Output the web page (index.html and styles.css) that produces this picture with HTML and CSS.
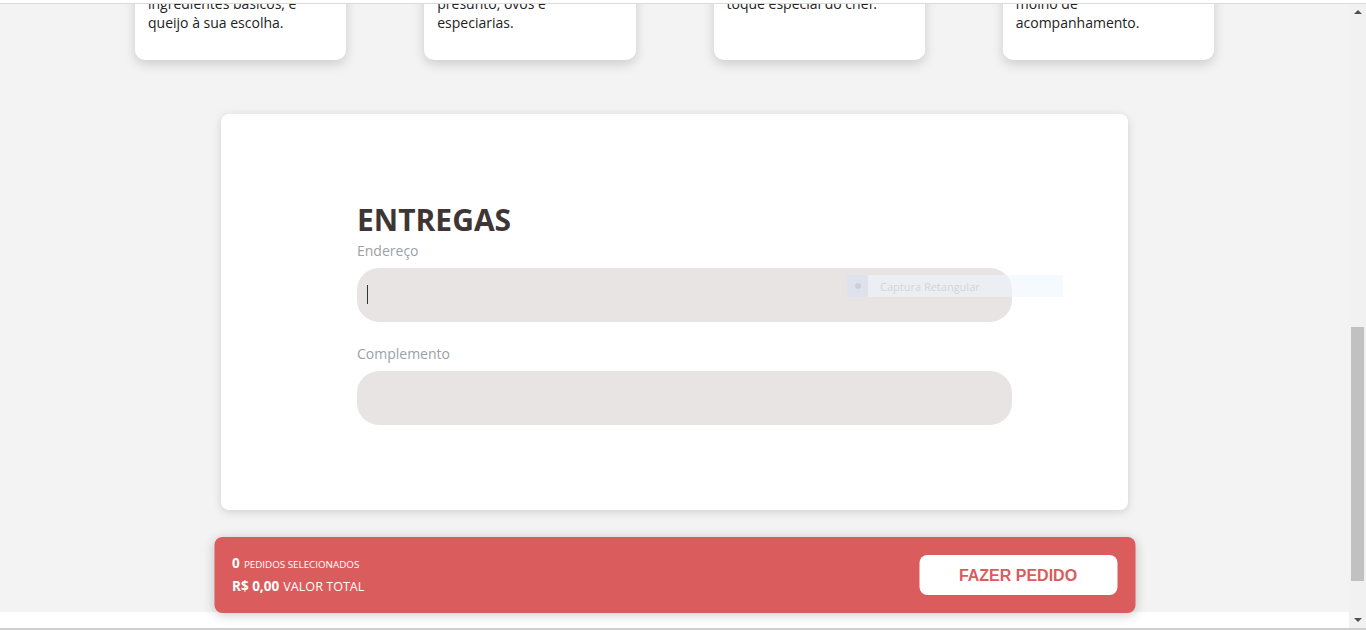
FILE: index.html
```html
<!DOCTYPE html>
<html lang="pt-BR">
<head>
<meta charset="utf-8">
<title>Pedidos</title>
<link rel="stylesheet" href="styles.css">
</head>
<body>
<div class="topbar"></div>
<div class="viewport">
  <div class="page">
    <div class="content">
      <section class="menu">
        <article class="card">
          <div class="card-img"></div>
          <h3 class="card-title">Pizza Mussarela</h3>
          <p class="card-text">Massa fina com molho,<br>ingredientes básicos, e<br>queijo à sua escolha.</p>
        </article>
        <article class="card">
          <div class="card-img"></div>
          <h3 class="card-title">Pizza Portuguesa</h3>
          <p class="card-text">Mussarela, cebola,<br>presunto, ovos e<br>especiarias.</p>
        </article>
        <article class="card">
          <div class="card-img"></div>
          <h3 class="card-title">Pizza da Casa</h3>
          <p class="card-text">Receita da casa com um<br>toque especial do chef.</p>
        </article>
        <article class="card">
          <div class="card-img"></div>
          <h3 class="card-title">Pizza de Frango</h3>
          <p class="card-text">Frango desfiado com<br>molho de<br>acompanhamento.</p>
        </article>
      </section>

      <section class="delivery">
        <div class="delivery-inner">
          <h2 class="delivery-title">ENTREGAS</h2>
          <label class="field-label" for="endereco">Endereço</label>
          <div class="field">
            <input class="field-input" id="endereco" type="text">
            <span class="caret"></span>
          </div>
          <label class="field-label second" for="complemento">Complemento</label>
          <div class="field">
            <input class="field-input" id="complemento" type="text">
          </div>
        </div>
      </section>

      <footer class="footer"></footer>
    </div>

    <div class="capture">
      <span class="capture-icon"><span class="capture-dot"></span></span>
      <span class="capture-text">Captura Retangular</span>
    </div>

    <div class="orderbar">
      <div class="order-info">
        <div class="order-line"><strong class="big">0</strong> <span class="small">PEDIDOS SELECIONADOS</span></div>
        <div class="order-line"><strong class="big">R$ 0,00</strong> <span class="mid">VALOR TOTAL</span></div>
      </div>
      <button class="order-btn" type="button">FAZER PEDIDO</button>
    </div>
  </div>
  <div class="scrollbar">
    <span class="arrow up"></span>
    <div class="track"><div class="thumb"></div></div>
    <span class="arrow down"></span>
  </div>
</div>
<div class="bottombar"></div>
</body>
</html>
```

FILE: styles.css
```css
* { box-sizing: border-box; }

html, body {
  margin: 0;
  padding: 0;
  height: 630px;
  overflow: hidden;
  background: #ffffff;
  font-family: "Open Sans", "Noto Sans", sans-serif;
}

.topbar {
  height: 4px;
  border-bottom: 1px solid #dadada;
  background: #ffffff;
}

.viewport {
  display: flex;
  height: 624px;
}

.page {
  flex: 1;
  position: relative;
  overflow: hidden;
  background: #f3f3f3;
}

.content {
  display: flex;
  flex-direction: column;
  align-items: center;
  margin-top: -182px;
}

.menu {
  display: grid;
  grid-template-columns: repeat(4, 1fr);
  gap: 78px;
  width: 1079px;
}

.card {
  background: #ffffff;
  border-radius: 10px;
  padding: 13px 13px 28px;
  box-shadow: 0 4px 12px rgba(0, 0, 0, 0.16);
}

.card-img {
  height: 100px;
  margin-bottom: 10px;
  border-radius: 6px;
  background: #eeeeee;
}

.card-title {
  margin: 0 0 6px;
  height: 24px;
  line-height: 24px;
  font-size: 16px;
  color: #333333;
}

.card-text {
  margin: 0;
  font-size: 14px;
  line-height: 19px;
  color: #222222;
}

.delivery {
  margin-top: 54px;
  width: 907px;
  height: 396px;
  background: #ffffff;
  border-radius: 8px;
  box-shadow: 0 2px 10px rgba(0, 0, 0, 0.14);
  padding: 88px 0 0 136px;
}

.delivery-inner {
  width: 655px;
  display: flex;
  flex-direction: column;
}

.delivery-title {
  margin: 0 0 4px;
  font-size: 30px;
  line-height: 35px;
  font-weight: 700;
  color: #3e3535;
}

.field-label {
  font-size: 14px;
  line-height: 20px;
  color: #9aa1a7;
  margin-bottom: 7px;
}

.field-label.second {
  margin-top: 22px;
}

.field {
  position: relative;
}

.field-input {
  display: block;
  width: 100%;
  height: 54px;
  border: none;
  outline: none;
  border-radius: 22px;
  background: #e8e4e3;
  padding: 0 10px;
  font-family: inherit;
  font-size: 15px;
}

.caret {
  position: absolute;
  left: 10px;
  top: 17px;
  width: 1px;
  height: 19px;
  background: #333333;
}

.footer {
  margin-top: 102px;
  align-self: stretch;
  height: 40px;
  background: #ffffff;
}

.capture {
  position: absolute;
  left: 847px;
  top: 271px;
  width: 216px;
  height: 22px;
  display: flex;
  align-items: center;
  background: rgba(236, 246, 255, 0.55);
}

.capture-icon {
  width: 21px;
  height: 22px;
  display: flex;
  align-items: center;
  justify-content: center;
  background: rgba(200, 208, 228, 0.4);
}

.capture-dot {
  width: 6px;
  height: 6px;
  border-radius: 50%;
  background: rgba(190, 195, 205, 0.6);
}

.capture-text {
  margin-left: 12px;
  font-size: 11px;
  color: rgba(185, 185, 195, 0.5);
}

.orderbar {
  position: absolute;
  left: 50%;
  bottom: 15px;
  transform: translateX(-50%);
  width: 921px;
  height: 76px;
  background: #db5c5c;
  border-radius: 8px;
  box-shadow: 0 2px 12px rgba(0, 0, 0, 0.2);
  display: flex;
  align-items: center;
  justify-content: space-between;
  padding: 0 18px;
}

.order-info {
  display: flex;
  flex-direction: column;
  gap: 4px;
  color: #ffffff;
  padding-bottom: 3px;
}

.order-line {
  height: 19px;
  line-height: 19px;
  white-space: nowrap;
}

.big {
  font-size: 13.5px;
  font-weight: 700;
}

.small {
  font-size: 9.8px;
}

.mid {
  font-size: 12.6px;
}

.order-btn {
  width: 198px;
  height: 40px;
  border: none;
  border-radius: 8px;
  background: #ffffff;
  color: #db5c5c;
  font-family: "Liberation Sans", Arial, sans-serif;
  font-size: 16px;
  font-weight: 700;
  text-align: center;
  padding: 1px 0 0;
}

.scrollbar {
  width: 17px;
  height: 624px;
  background: #f1f1f1;
  display: flex;
  flex-direction: column;
  align-items: center;
}

.arrow {
  width: 0;
  height: 0;
  border-left: 4px solid transparent;
  border-right: 4px solid transparent;
  margin: 6px 0;
}

.arrow.up {
  border-bottom: 4px solid #505050;
}

.arrow.down {
  border-top: 4px solid #505050;
}

.track {
  flex: 1;
  width: 100%;
  display: flex;
  flex-direction: column;
  align-items: center;
  padding-top: 307px;
}

.thumb {
  width: 13px;
  height: 254px;
  background: #c1c1c1;
}

.bottombar {
  height: 2px;
  background: #cfcfcf;
}
```
